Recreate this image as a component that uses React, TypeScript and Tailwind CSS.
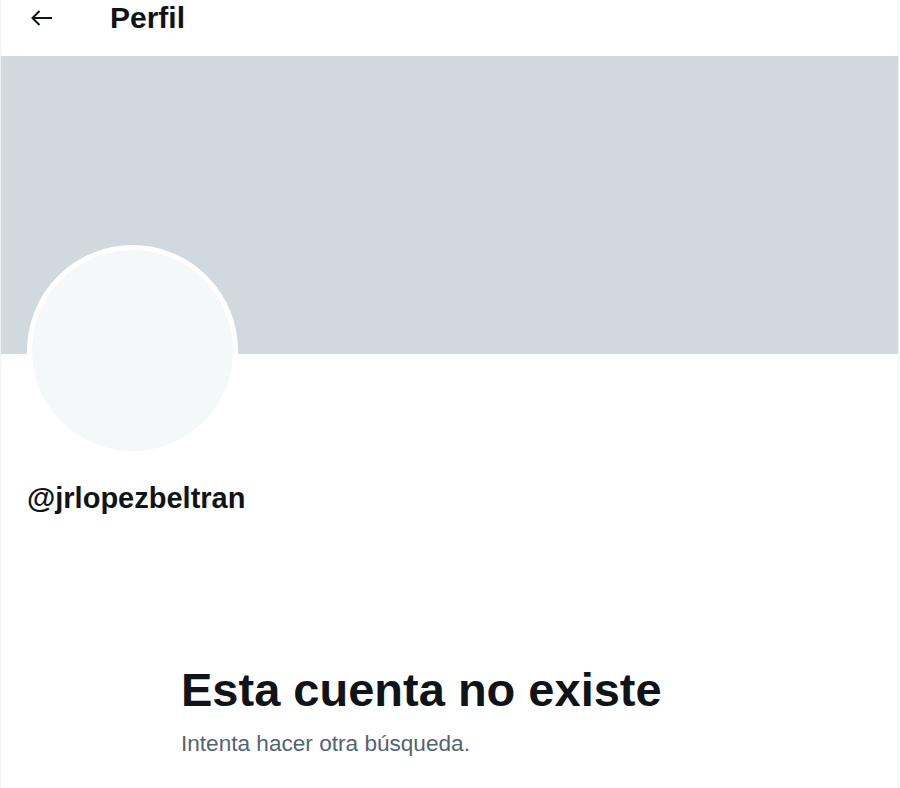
export default function App() {
  return (
    <div
      className="min-h-[788px] w-[899px] border-x border-[#eff3f4] bg-white text-[#0f1419]"
      style={{ fontFamily: '"Liberation Sans", Arial, sans-serif' }}
    >
      <header className="h-14 pt-px">
        <div className="flex h-[34px] items-center pl-[29px]">
          <svg width="22" height="16" viewBox="0 0 22 16" fill="none" stroke="#0f1419" strokeWidth="2">
            <path d="M22 8H2.5" />
            <path d="M9.5 1 2.5 8l7 7" />
          </svg>
          <h1 className="ml-[58px] text-[30px] font-bold leading-[34px]">Perfil</h1>
        </div>
      </header>

      <div className="h-[298px] bg-[#cfd9de]" />

      <div className="ml-[26px] -mt-[109px] h-[211px] w-[211px] rounded-full border-[5px] border-white bg-[#f5f8f9]" />

      <p className="ml-[26px] mt-[25px] text-[29px] font-bold leading-[34px]">@jrlopezbeltran</p>

      <div className="ml-[180px] mt-[147px]">
        <h2 className="text-[47px] font-bold leading-[56px]">Esta cuenta no existe</h2>
        <p className="mt-3 text-[22.6px] leading-[28px] text-[#536471]">Intenta hacer otra búsqueda.</p>
      </div>
    </div>
  );
}
